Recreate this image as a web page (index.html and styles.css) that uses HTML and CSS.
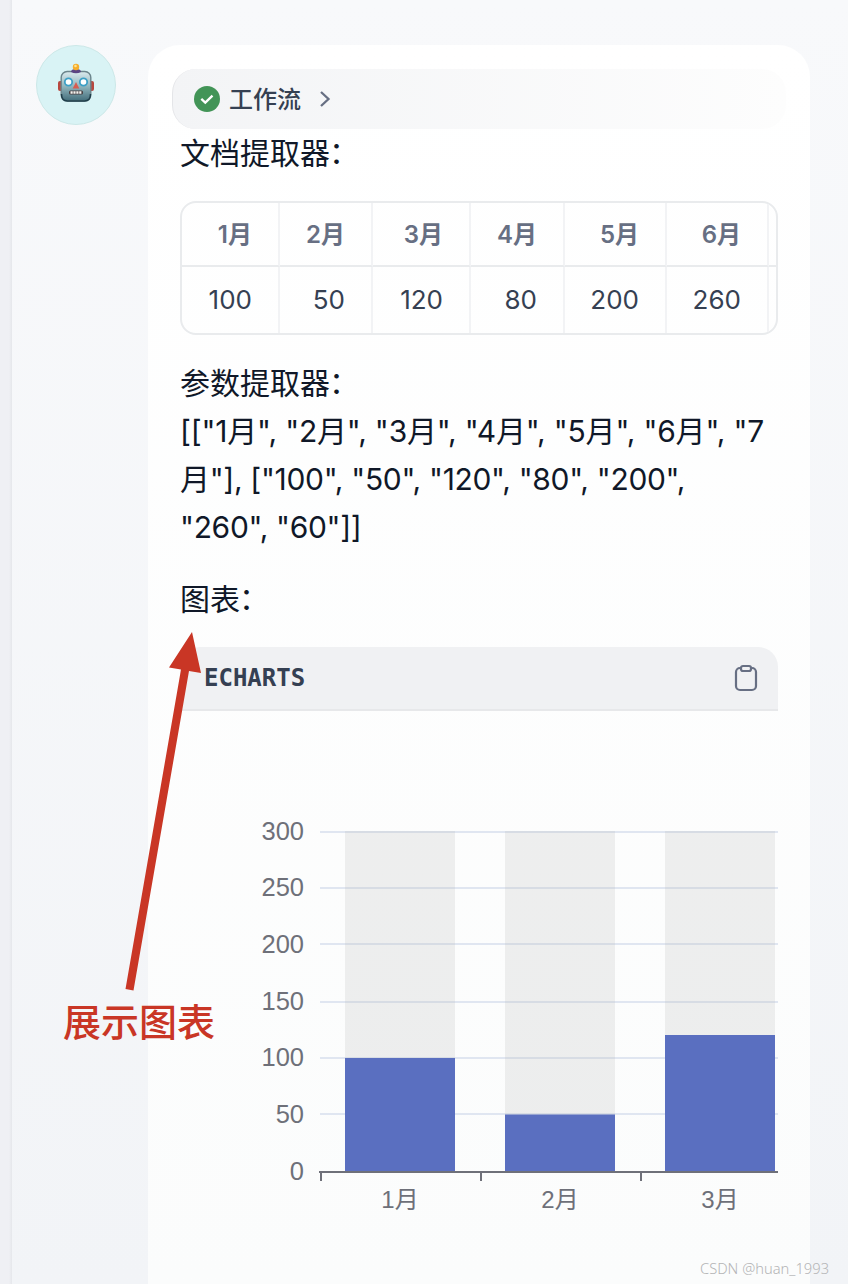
FILE: index.html
```html
<!DOCTYPE html>
<html lang="zh-CN">
<head>
  <meta charset="UTF-8">
  <meta name="viewport" content="width=device-width, initial-scale=1.0">
  <title>图表</title>
  <link rel="stylesheet" href="styles.css">
</head>
<body>
  <div class="rail"></div>
  <main class="chat">
    <div class="avatar">
      <svg width="38" height="40" viewBox="0 0 38 40">
        <defs>
          <linearGradient id="face" x1="0" y1="0" x2="0" y2="1">
            <stop offset="0" stop-color="#dcebee"/>
            <stop offset=".5" stop-color="#91b5bd"/>
            <stop offset="1" stop-color="#426d7a"/>
          </linearGradient>
        </defs>
        <rect x="1" y="18" width="5" height="10" rx="2" fill="#b8473f"/>
        <rect x="32" y="18" width="5" height="10" rx="2" fill="#b8473f"/>
        <rect x="4.200" y="8.500" width="29.600" height="29.500" rx="6" fill="url(#face)" stroke="#6b848b" stroke-width="1.400"/>
        <path d="M4.500 31q0 7 6 7h17q6 0 6-7" fill="none" stroke="#203f4b" stroke-width="1.500"/>
        <path d="M14 9q0-3 5-3t5 3q-5 2.500-10 0z" fill="#5b4583"/>
        <circle cx="19" cy="4" r="3.200" fill="#f6ae2b"/>
        <circle cx="18.500" cy="3" r="1.300" fill="#ffe391"/>
        <circle cx="11.500" cy="19" r="3.700" fill="#fff" stroke="#3d9fc5" stroke-width="1.800"/>
        <circle cx="26.500" cy="19" r="3.700" fill="#fff" stroke="#3d9fc5" stroke-width="1.800"/>
        <path d="M19 19l3.300 6.500h-6.600z" fill="#d85b50"/>
        <rect x="12" y="27.500" width="14" height="4" rx="1.500" fill="#473f42"/>
        <path d="M13.500 29.500h11" stroke="#f4f4f0" stroke-width="2.600" stroke-dasharray="2.200 .7"/>
      </svg>
    </div>
    <article class="bubble">
      <div class="workflow">
        <svg width="26" height="26" viewBox="0 0 26 26">
          <circle cx="13" cy="13" r="13" fill="#429457"/>
          <path d="M7.300 12.800l4 3.800 7.200-7" fill="none" stroke="#fff" stroke-width="2.300"/>
        </svg>
        <span>工作流</span>
        <svg class="chevron" width="12" height="18" viewBox="0 0 12 18">
          <path d="M2 2l7.500 7L2 16" fill="none" stroke="#676f83" stroke-width="2.300"/>
        </svg>
      </div>
      <div class="content">
        <p>文档提取器<span class="colon">：</span></p>
        <div class="table-wrap">
          <table>
            <colgroup>
              <col class="w-98"><col class="w-93"><col class="w-98"><col class="w-94"><col class="w-102"><col class="w-102"><col class="w-93">
            </colgroup>
            <thead>
              <tr><th>1月</th><th>2月</th><th>3月</th><th>4月</th><th>5月</th><th>6月</th><th></th></tr>
            </thead>
            <tbody>
              <tr><td>100</td><td>50</td><td>120</td><td>80</td><td>200</td><td>260</td><td></td></tr>
            </tbody>
          </table>
        </div>
        <p class="params">参数提取器<span class="colon">：</span><br><span class="months">[["1月", "2月", "3月", "4月", "5月", "6月", "7</span><br><span class="values">月"], ["100", "50", "120", "80", "200",<br>"260", "60"]]</span></p>
        <p class="chart-title">图表<span class="colon">：</span></p>
        <div class="code-head">
          <span>ECHARTS</span>
          <svg width="24" height="28" viewBox="0 0 24 28" fill="none" stroke="#676f83" stroke-width="2.200">
            <rect x="2" y="4" width="20" height="22" rx="4"/>
            <rect x="7" y="2" width="10" height="5" rx="2" fill="#f0f1f3"/>
          </svg>
        </div>
        <svg class="chart" width="598" height="573" viewBox="180 711 598 573">
          <path d="M320 832h458M320 888h458M320 944h458M320 1002h458M320 1058h458M320 1114h458" stroke="#e0e6f1" stroke-width="2"/>
          <g fill="#b4b4b4" fill-opacity=".2">
            <rect x="345" y="831" width="110" height="340"/>
            <rect x="505" y="831" width="110" height="340"/>
            <rect x="665" y="831" width="110" height="340"/>
          </g>
          <g fill="#5a6fc0">
            <rect x="345" y="1058" width="110" height="113"/>
            <rect x="505" y="1114.500" width="110" height="56.500"/>
            <rect x="665" y="1035" width="110" height="136"/>
          </g>
          <path d="M319 1172h459M321 1172v9M481 1172v9M641 1172v9" fill="none" stroke="#6e7079" stroke-width="2"/>
          <g class="axis-y">
            <text x="304" y="840">300</text>
            <text x="304" y="896">250</text>
            <text x="304" y="953">200</text>
            <text x="304" y="1010">150</text>
            <text x="304" y="1066">100</text>
            <text x="304" y="1123">50</text>
            <text x="304" y="1180">0</text>
          </g>
          <g class="axis-x">
            <text x="400" y="1208">1月</text>
            <text x="560" y="1208">2月</text>
            <text x="720" y="1208">3月</text>
          </g>
        </svg>
      </div>
    </article>
  </main>
  <svg class="arrow" width="80" height="362" viewBox="124 630 80 362" fill="#c93625">
    <path d="M192 632L201 673 189 671 133.500 990.500 125.500 989 181 669.500 169 667.500z"/>
  </svg>
  <div class="note">展示图表</div>
  <div class="watermark">CSDN @huan_1993</div>
</body>
</html>
```

FILE: styles.css
```css
* { box-sizing: border-box; }
body {
  position: relative;
  display: flex;
  width: 848px;
  height: 1284px;
  margin: 0;
  overflow: hidden;
  background: linear-gradient(#f8f9fb, #f2f4f7);
  font-family: Inter, "Noto Sans CJK SC", sans-serif;
  color: #101828;
}
.rail { width: 12px; background: linear-gradient(to right, #eff0f4 75%, #e5e7eb); }
.chat { display: flex; align-items: flex-start; gap: 32px; padding: 45px 0 0 24px; }
.avatar {
  display: flex;
  align-items: center;
  justify-content: center;
  width: 80px;
  height: 80px;
  border: 1px solid #cce8e8;
  border-radius: 50%;
  background: #d9f3f5;
}
.avatar svg { margin-bottom: 4px; }
.bubble {
  width: 662px;
  height: 1239px;
  padding: 24px 24px 0;
  border-radius: 32px 32px 0 0;
  background: linear-gradient(#fff, #fbfcfc);
}
.workflow {
  display: flex;
  align-items: center;
  height: 60px;
  padding-left: 21px;
  border-left: 1px solid #e4e5e8;
  border-radius: 24px;
  background: linear-gradient(to right, #f3f4f6, #fdfdfd);
  font-size: 24px;
  font-weight: 500;
  color: #354052;
}
.workflow span { margin-left: 9px; padding-bottom: 3px; }
.chevron { margin-left: 18px; }
.content { padding: 0 8px; }
p { margin: 0; font-size: 30px; line-height: 48px; white-space: nowrap; }
.colon { position: relative; top: -1px; left: -1px; }
.table-wrap {
  width: 598px;
  height: 134px;
  margin-top: 24px;
  overflow: hidden;
  border: 2px solid #e9ebed;
  border-radius: 16px;
}
table { width: 680px; table-layout: fixed; border-spacing: 0; }
.w-93 { width: 93px; }
.w-94 { width: 94px; }
.w-98 { width: 98px; }
.w-102 { width: 102px; }
th, td {
  padding: 0 26px 0 0;
  border-right: 2px solid #f2f3f5;
  text-align: right;
  white-space: nowrap;
}
th {
  height: 64px;
  padding-bottom: 3px;
  border-bottom: 2px solid #e9ebed;
  font-size: 24px;
  font-weight: 600;
  color: #676f83;
}
td { height: 66px; padding-bottom: 2px; font-size: 26px; color: #354052; }
.params { margin-top: 24px; }
.months { letter-spacing: -0.19px; }
.values { letter-spacing: -0.33px; }
.chart-title { margin-top: 24px; }
.code-head {
  display: flex;
  align-items: center;
  justify-content: space-between;
  height: 64px;
  margin-top: 24px;
  padding: 0 20px 0 24px;
  border-bottom: 2px solid #e7e8ea;
  border-radius: 20px 20px 0 0;
  background: #f0f1f3;
  font-family: "DejaVu Sans Mono", monospace;
  font-size: 24px;
  font-weight: 700;
  color: #354052;
}
.chart { display: block; }
.chart text {
  font-family: "Liberation Sans", "Noto Sans CJK SC", sans-serif;
  fill: #6e7079;
}
.axis-y { font-size: 25.5px; text-anchor: end; }
.axis-x { font-size: 24px; text-anchor: middle; }
.arrow { position: absolute; left: 124px; top: 630px; }
.note {
  position: absolute;
  left: 63px;
  top: 995px;
  font-size: 38px;
  font-weight: 500;
  line-height: 54px;
  color: #c93625;
}
.watermark {
  position: absolute;
  left: 700px;
  top: 1258px;
  font-family: "Noto Sans", sans-serif;
  font-size: 14.7px;
  font-weight: 300;
  line-height: 20px;
  white-space: nowrap;
  color: #b4b4b6;
}
```
